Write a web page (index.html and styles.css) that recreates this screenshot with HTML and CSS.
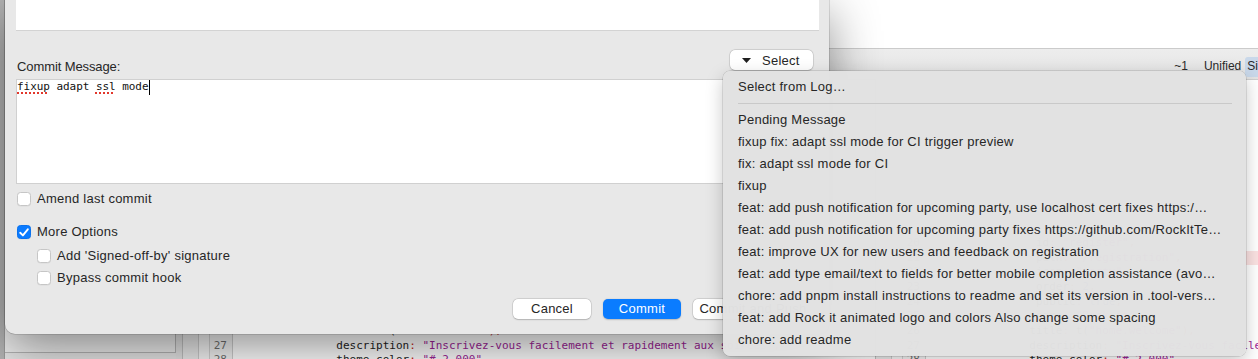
FILE: index.html
```html
<!DOCTYPE html>
<html lang="en">
<head>
<meta charset="utf-8">
<title>Commit</title>
<link rel="stylesheet" href="styles.css">
</head>
<body>
<div class="window">
  <div class="rail"></div>
  <div class="main">
    <div class="details"></div>
    <div class="toolbar">
      <span class="tb-count">~1</span>
      <span class="seg"><span class="seg-item">Unified</span><span class="seg-item on">Side-by-side</span></span>
    </div>
    <div class="content">
      <div class="files"></div>
      <div class="spacer"></div>
      <div class="pane">
        <div class="strip"></div>
        <div class="strip2"></div>
        <div class="gutter"><div>20</div><div>21</div><div>22</div><div>23</div><div>24</div><div>25</div><div>26</div><div>27</div><div>28</div></div>
        <div class="code">
          <div class="ln">                <span class="k">id</span><span class="p">:</span> <span class="s">"register"</span><span class="p">,</span></div>
          <div class="ln">                <span class="k">path</span><span class="p">:</span> <span class="s">"/register"</span><span class="p">,</span></div>
          <div class="ln">                <span class="k">icon</span><span class="p">:</span> <span class="s">"party"</span><span class="p">,</span></div>
          <div class="ln">                <span class="k">order</span><span class="p">:</span> <span class="n">2</span><span class="p">,</span></div>
          <div class="ln">                <span class="k">public</span><span class="p">:</span> <span class="n">true</span><span class="p">,</span></div>
          <div class="ln">                <span class="k">name</span><span class="p">:</span> <span class="s">"Rock it"</span><span class="p">,</span></div>
          <div class="ln">               <span class="k">title</span><span class="p">:</span> t(<span class="s">"home.welcome"</span><span class="p">),</span></div>
          <div class="ln">               <span class="k">description</span><span class="p">:</span> <span class="s">"Inscrivez-vous facilement et rapidement aux soirées"</span><span class="p">,</span></div>
          <div class="ln">               <span class="k">theme_color</span><span class="p">:</span> <span class="s">"#_2_000"</span><span class="p">,</span></div>
        </div>
      </div>
      <div class="pane">
        <div class="strip"></div>
        <div class="strip2"></div>
        <div class="gutter"><div>20</div><div class="del">21</div><div>22</div><div>23</div><div>24</div><div>25</div><div>26</div><div>27</div><div>28</div></div>
        <div class="code">
          <div class="ln">                <span class="k">id</span><span class="p">:</span> <span class="s">"register"</span><span class="p">,</span></div>
          <div class="ln del">                <span class="k">path</span><span class="p">:</span> <span class="s">"/registration"</span><span class="p">,</span></div>
          <div class="ln">                <span class="k">icon</span><span class="p">:</span> <span class="s">"party"</span><span class="p">,</span></div>
          <div class="ln">                <span class="k">order</span><span class="p">:</span> <span class="n">2</span><span class="p">,</span></div>
          <div class="ln">                <span class="k">public</span><span class="p">:</span> <span class="n">true</span><span class="p">,</span></div>
          <div class="ln">                <span class="k">name</span><span class="p">:</span> <span class="s">"Rock it"</span><span class="p">,</span></div>
          <div class="ln">               <span class="k">title</span><span class="p">:</span> t(<span class="s">"home.welcome"</span><span class="p">),</span></div>
          <div class="ln">               <span class="k">description</span><span class="p">:</span> <span class="s">"Inscrivez-vous facilement et rapidement aux soirées"</span><span class="p">,</span></div>
          <div class="ln">               <span class="k">theme_color</span><span class="p">:</span> <span class="s">"#_2_000"</span><span class="p">,</span></div>
        </div>
      </div>
    </div>
  </div>

  <div class="sheet">
    <div class="summary"></div>
    <div class="msg-head">
      <span class="label">Commit Message:</span>
      <button class="select-btn"><svg class="tri" width="9" height="5" viewBox="0 0 9 5"><polygon points="0,0 9,0 4.5,5" fill="#1f1f1f"/></svg><span>Select</span></button>
    </div>
    <div class="message"><span class="typo">fixup</span> adapt <span class="typo">ssl</span> mode<span class="caret"></span></div>
    <label class="check"><span class="box"></span><span>Amend last commit</span></label>
    <label class="check more"><span class="box on"><svg width="10" height="9" viewBox="0 0 10 9"><path d="M1.2 4.8 L3.9 7.4 L8.8 1.3" fill="none" stroke="#fff" stroke-width="1.9" stroke-linecap="round" stroke-linejoin="round"/></svg></span><span>More Options</span></label>
    <label class="check sub first"><span class="box"></span><span>Add 'Signed-off-by' signature</span></label>
    <label class="check sub"><span class="box"></span><span>Bypass commit hook</span></label>
    <div class="actions">
      <button class="btn">Cancel</button>
      <button class="btn primary">Commit</button>
      <button class="btn wide">Commit and Push</button>
    </div>
  </div>

  <div class="menu">
    <div class="menu-item">Select from Log…</div>
    <div class="menu-sep"></div>
    <div class="menu-item">Pending Message</div>
    <div class="menu-item">fixup fix: adapt ssl mode for CI trigger preview</div>
    <div class="menu-item">fix: adapt ssl mode for CI</div>
    <div class="menu-item">fixup</div>
    <div class="menu-item">feat: add push notification for upcoming party, use localhost cert fixes https:/…</div>
    <div class="menu-item">feat: add push notification for upcoming party fixes https://github.com/RockItTe…</div>
    <div class="menu-item">feat: improve UX for new users and feedback on registration</div>
    <div class="menu-item">feat: add type email/text to fields for better mobile completion assistance (avo…</div>
    <div class="menu-item">chore: add pnpm install instructions to readme and set its version in .tool-vers…</div>
    <div class="menu-item">feat: add Rock it animated logo and colors Also change some spacing</div>
    <div class="menu-item">chore: add readme</div>
  </div>
</div>
</body>
</html>
```
FILE: styles.css
```css
* { box-sizing: border-box; }
html, body { margin: 0; padding: 0; }
body {
  width: 1258px;
  height: 359px;
  overflow: hidden;
  font-family: "Liberation Sans", Arial, sans-serif;
  background: #e6e6e6;
}
.window {
  position: relative;
  width: 1258px;
  height: 359px;
  display: flex;
  overflow: hidden;
  background: #e6e6e6;
}
.rail {
  width: 5px;
  flex: none;
  background: #b4b4b4;
  border-right: 1px solid #9c9c9c;
}
.main {
  flex: 1;
  min-width: 0;
  display: grid;
  grid-template-rows: 49px 31px 1fr;
}
.details {
  background: #fff;
  border-bottom: 1px solid #cbcbcb;
}
.toolbar {
  background: linear-gradient(#ededed, #e3e3e3);
  display: flex;
  justify-content: flex-end;
  align-items: flex-start;
  font-size: 12px;
  color: #2a2a2a;
  overflow: hidden;
  border-bottom: 1px solid #cfcfcf;
}
.tb-count {
  margin-top: 10px;
  line-height: 14px;
  margin-right: 13px;
}
.seg {
  display: flex;
  margin-top: 8px;
  margin-right: -59px;
}
.seg-item {
  height: 20px;
  line-height: 18px;
  padding: 0 3px;
  white-space: nowrap;
}
.seg-item.on {
  background: #c9d8ea;
  border-radius: 3px;
  margin-left: 1px;
  padding: 0 3px 0 2px;
}
.content {
  display: grid;
  grid-template-columns: 171px 6px 693px 1fr;
  min-height: 0;
  overflow: hidden;
}
.files {
  background: #eeeeee;
  border-right: 1px solid #b5b5b5;
  border-bottom: 1px solid #b5b5b5;
  margin-bottom: 6px;
}
.spacer { background: #e4e4e4; }
.pane {
  display: grid;
  grid-template-columns: 16px 10px 24px 1fr;
  background: #fff;
  overflow: hidden;
  border-left: 1px solid #c2c2c2;
}
.strip { background: #ececec; border-right: 1px solid #cdcdcd; }
.strip2 { background: #f7f7f7; }
.gutter {
  background: #f4f4f4;
  border-left: 1px solid #d4d4d4;
  border-right: 1px solid #cfcfcf;
  padding-top: 156px;
  font: 11px/14.67px "DejaVu Sans Mono", monospace;
  color: #707070;
  text-align: right;
}
.gutter div { padding-right: 5px; height: 14.67px; }
.gutter .del { background: #f8dcdc; }
.code {
  padding-top: 156px;
  font: 11px/14.67px "DejaVu Sans Mono", monospace;
  color: #1d1d1d;
  overflow: hidden;
}
.ln { padding-left: 4px; height: 14.67px; white-space: pre; }
.ln.del { background: #fbe2e2; }
.k { color: #1d1d1d; }
.p { color: #c8271c; }
.s { color: #9d2597; }
.n { color: #1c3fb8; }

/* Sheet dialog */
.sheet {
  position: absolute;
  left: 5px;
  top: 0;
  width: 824px;
  height: 334px;
  background: #e8e8e8;
  border-radius: 0 0 10px 10px;
  padding: 0 10px 0 11px;
  display: flex;
  flex-direction: column;
  box-shadow: 0 0 0 0.5px rgba(0, 0, 0, 0.22), 0 14px 50px rgba(0, 0, 0, 0.45);
  font-size: 13px;
  letter-spacing: 0.25px;
  color: #262626;
}
.summary {
  height: 31px;
  flex: none;
  background: #fff;
  border-bottom: 1px solid #d3d3d3;
}
.msg-head {
  display: flex;
  justify-content: space-between;
  align-items: flex-start;
  height: 29px;
  margin-top: 19px;
  flex: none;
}
.label {
  margin-top: 9px;
  margin-left: 1px;
  line-height: 16px;
  letter-spacing: -0.1px;
}
.select-btn {
  width: 83px;
  height: 20px;
  margin-right: 6px;
  border: none;
  border-radius: 5px;
  background: #fff;
  box-shadow: 0 0 0 0.5px rgba(0, 0, 0, 0.16), 0 0.5px 1.5px rgba(0, 0, 0, 0.16);
  display: flex;
  align-items: center;
  padding: 0 0 0 12px;
  gap: 11px;
  font-family: "Liberation Sans", Arial, sans-serif;
  font-size: 13px;
  letter-spacing: 0.25px;
  color: #262626;
}
.tri { flex: none; }
.message {
  height: 105px;
  flex: none;
  background: #fff;
  border: 1px solid #d0d0d0;
  border-right: none;
  font: 11px/14px "DejaVu Sans Mono", monospace;
  letter-spacing: -0.05px;
  color: #111;
  padding: 0;
  white-space: pre;
  display: flex;
  align-items: flex-start;
}
.typo {
  text-decoration: underline dotted #e2372c;
  text-decoration-thickness: 2px;
  text-underline-offset: 2px;
}
.caret {
  display: inline-block;
  width: 1px;
  height: 15px;
  background: #000;
  margin-left: 1px;
}
.check {
  display: flex;
  align-items: center;
  height: 22px;
  gap: 6px;
  margin-left: 1px;
  flex: none;
  line-height: 16px;
}
.check:first-of-type { margin-top: 4px; }
.check.more { margin-top: 11px; }
.check.sub { margin-left: 21px; }
.check.sub.first { margin-top: 2px; }
.box {
  width: 14px;
  height: 14px;
  flex: none;
  border-radius: 3.5px;
  background: #fff;
  border: 1px solid #c6c6c6;
  box-shadow: 0 0.5px 0.5px rgba(0, 0, 0, 0.06);
}
.box.on {
  background: #0b7bff;
  border-color: #0a72ee;
  display: flex;
  align-items: center;
  justify-content: center;
}
.actions {
  display: flex;
  justify-content: flex-end;
  gap: 12px;
  margin-top: 10px;
  padding-right: 6px;
}
.btn {
  width: 78px;
  height: 20px;
  border: none;
  border-radius: 5px;
  background: #fff;
  box-shadow: 0 0 0 0.5px rgba(0, 0, 0, 0.16), 0 0.5px 1.5px rgba(0, 0, 0, 0.16);
  font-family: "Liberation Sans", Arial, sans-serif;
  font-size: 13px;
  letter-spacing: 0.25px;
  line-height: 20px;
  padding: 0;
  color: #262626;
  text-align: center;
  white-space: nowrap;
}
.btn.primary {
  background: #0a7cff;
  color: #fff;
  box-shadow: 0 0.5px 1.5px rgba(0, 0, 0, 0.2);
}
.btn.wide { width: 120px; }

/* Drop-down menu */
.menu {
  position: absolute;
  left: 723px;
  top: 71px;
  width: 523px;
  padding: 5px 0;
  background: rgba(226, 226, 226, 0.985);
  border-radius: 7px;
  box-shadow: 0 0 0 0.5px rgba(0, 0, 0, 0.2), 0 6px 18px rgba(0, 0, 0, 0.22);
  font-size: 13px;
  line-height: 22px;
  letter-spacing: 0.25px;
  color: #262626;
}
.menu-item {
  height: 22px;
  padding: 0 15px;
  white-space: nowrap;
  overflow: hidden;
}
.menu-sep {
  height: 1px;
  background: #c9c9c9;
  margin: 5px 14px 5px 15px;
}
```
